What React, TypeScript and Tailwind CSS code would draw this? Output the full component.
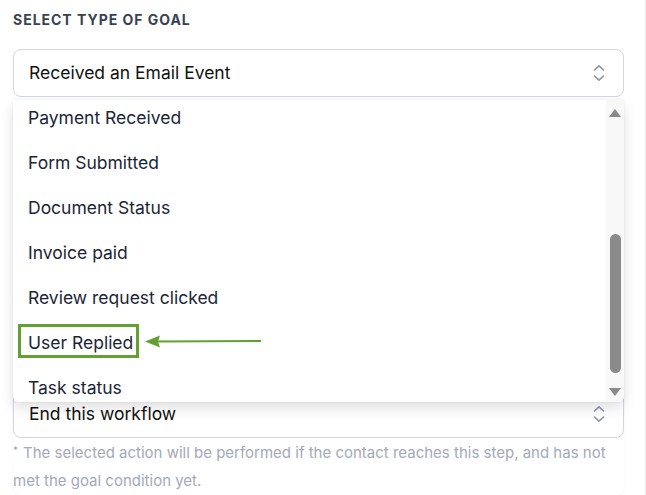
import React from "react";

const GOAL_OPTIONS = [
  "Payment Received",
  "Form Submitted",
  "Document Status",
  "Invoice paid",
  "Review request clicked",
  "User Replied",
  "Task status",
];

function UpDownIcon() {
  return (
    <svg width="12" height="18" viewBox="0 0 12 18" fill="none" stroke="#8b93a7" strokeWidth="1.6" strokeLinecap="round" strokeLinejoin="round">
      <path d="M1.5 6 L6 1.8 L10.5 6" />
      <path d="M1.5 12 L6 16.2 L10.5 12" />
    </svg>
  );
}

function SelectBox({ value }: { value: string }) {
  return (
    <div className="flex h-12 items-center justify-between rounded-lg border border-[#d3d6e0] bg-white pl-[15px] pr-[18px]">
      <span className="text-[17.5px] text-[#111111]">{value}</span>
      <UpDownIcon />
    </div>
  );
}

export default function App() {
  return (
    <div className="relative h-[495px] w-[646px] overflow-hidden border-r border-[#eeeef2] bg-white font-['Inter',sans-serif]">
      <div className="pl-[13px] pr-[21px] pt-[12px]">
        <h3 className="text-[14px] font-bold uppercase leading-4 tracking-[0.07em] text-[#394253]">
          Select type of goal
        </h3>
        <div className="mt-[21px]">
          <SelectBox value="Received an Email Event" />
        </div>

        {/* action select + note */}
        <div className="mt-[293px] rounded-lg shadow-[0_1px_3px_rgba(0,0,0,0.05)]">
          <SelectBox value="End this workflow" />
          <div className="relative pt-px">
            <span className="absolute left-0 top-[7px] text-[10px] leading-[10px] text-[#a3a9ba]">*</span>
            <p className="indent-[10px] text-[15px] leading-7 text-[#a3a9ba]">
              The selected action will be performed if the contact reaches this step, and has not met the goal condition yet.
            </p>
          </div>
        </div>
      </div>

      {/* open dropdown list */}
      <div className="absolute left-[13px] top-[100px] h-[302px] w-[611px] overflow-hidden rounded-b-md bg-white shadow-[0_6px_14px_rgba(0,0,0,0.12),0_0_3px_rgba(0,0,0,0.06)]">
        <ul className="mt-[-4px] flex flex-col pr-[18px]">
          {GOAL_OPTIONS.map((opt) => (
            <li key={opt} className="flex h-[45px] items-center px-[15px] text-[17.5px] text-[#1b2537]">
              {opt}
            </li>
          ))}
        </ul>

        {/* scrollbar */}
        <div className="absolute right-0 top-0 flex h-full w-[18px] flex-col items-center bg-[#f8f8f8] pb-[6px] pt-[9px]">
          <div className="h-0 w-0 border-x-[6px] border-b-[8px] border-x-transparent border-b-[#8a8a8a]" />
          <div className="mt-[117px] h-[139px] w-[11px] rounded-full bg-[#8a8a8a]" />
          <div className="mt-auto h-0 w-0 border-x-[6px] border-t-[8px] border-x-transparent border-t-[#8a8a8a]" />
        </div>

        {/* annotation */}
        <div className="absolute left-[5px] top-[224px] h-[34px] w-[121px] border-[3px] border-[#62a032]" />
        <svg className="absolute left-[130px] top-[232px]" width="122" height="18" viewBox="0 0 122 18">
          <path d="M14 9.5 L118 9" stroke="#62a032" strokeWidth="2" />
          <path d="M2 9.5 L17 3.5 L15 9.5 L17 15.5 Z" fill="#62a032" />
        </svg>
      </div>
    </div>
  );
}
